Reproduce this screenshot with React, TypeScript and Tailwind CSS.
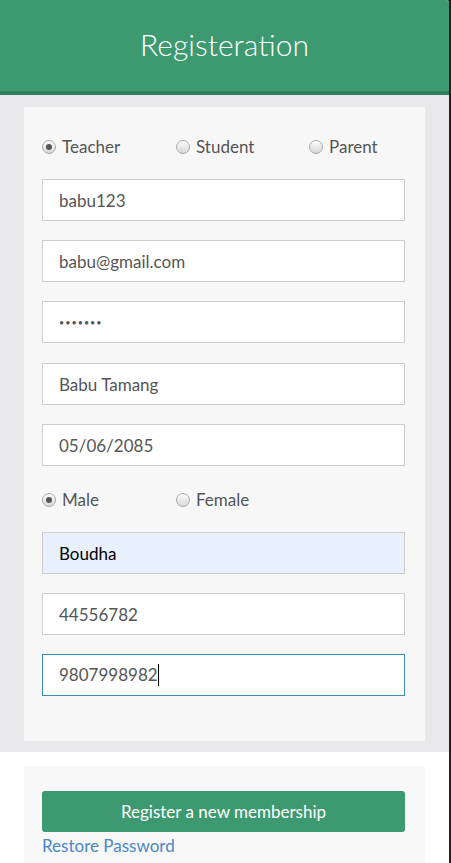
import React from "react";

const font = { fontFamily: "Lato, 'Open Sans', sans-serif" };

function Radio({ checked, label }: { checked?: boolean; label: string }) {
    return (
        <label className="flex items-center gap-[6px] text-[17px] text-[#555]">
            <span className="w-[14px] h-[14px] rounded-full border border-[#a9a9a9] bg-gradient-to-b from-[#fdfdfd] to-[#d8d8d8] flex items-center justify-center">
                {checked && <span className="w-[6px] h-[6px] rounded-full bg-[#555]" />}
            </span>
            {label}
        </label>
    );
}

function Field({ value, type = "text", className = "" }: { value: string; type?: string; className?: string }) {
    const size = type === "password" ? "text-[9px] tracking-[1px]" : "text-[17px]";
    return (
        <input
            type={type}
            defaultValue={value}
            readOnly
            className={`block w-full h-[42px] border border-[#cccccc] bg-white px-[16px] ${size} text-[#555] outline-none ${className}`}
            style={font}
        />
    );
}

export default function App() {
    const fields = [
        { value: "babu123" },
        { value: "babu@gmail.com" },
        { value: "1234567", type: "password" },
        { value: "Babu Tamang" },
        { value: "05/06/2085" },
    ];

    return (
        <div className="flex min-h-[863px] bg-[#1f1f1f]" style={font}>
            <div className="flex-1 flex flex-col bg-white rounded-tr-[3px] overflow-hidden">
                {/* Header */}
                <header className="h-[95px] bg-[#3d9970] border-b-4 border-[#327f5c] flex items-center justify-center">
                    <h1 className="text-[30px] font-light text-white -mt-[2px]">Registeration</h1>
                </header>

                {/* Form */}
                <section className="bg-[#e9e9eb] px-[24px] pt-[12px] pb-[11px]">
                    <div className="bg-[#f7f7f7] pt-[27px] pb-[45px] pl-[18px] pr-[20px]">
                        <div className="grid grid-cols-[134px_133px_1fr] h-[20px] mb-[25px]">
                            <Radio checked label="Teacher" />
                            <Radio label="Student" />
                            <Radio label="Parent" />
                        </div>

                        {fields.map((f, i) => (
                            <Field
                                key={i}
                                value={f.value}
                                type={f.type}
                                className={i === 4 ? "mb-[21px]" : i === 2 ? "mb-[20px]" : "mb-[19px]"}
                            />
                        ))}

                        <div className="grid grid-cols-[134px_1fr] h-[20px] mb-[25px]">
                            <Radio checked label="Male" />
                            <Radio label="Female" />
                        </div>

                        <input
                            defaultValue="Boudha"
                            readOnly
                            className="block w-full h-[42px] border border-[#cccccc] bg-[#e8f0fe] px-[16px] text-[17px] text-black outline-none mb-[19px]"
                            style={font}
                        />
                        <Field value="44556782" className="mb-[19px]" />
                        <div className="h-[42px] border border-[#3c8dbc] bg-white px-[16px] flex items-center text-[17px] text-[#555]">
                            9807998982
                            <span className="w-px h-[22px] bg-black" />
                        </div>
                    </div>
                </section>

                {/* Footer */}
                <section className="flex-1 bg-white px-[24px] pt-[14px]">
                    <div className="h-full bg-[#f8f8f8] pt-[25px] pl-[18px] pr-[20px]">
                        <button className="w-full h-[41px] rounded-[3px] bg-[#3d9970] text-white text-[17px]">
                            Register a new membership
                        </button>
                        <a href="#" className="block mt-[3px] text-[17px] text-[#4a87c6] leading-[22px]">
                            Restore Password
                        </a>
                    </div>
                </section>
            </div>
            <div className="w-[2px] bg-[#1f1f1f]" />
        </div>
    );
}
